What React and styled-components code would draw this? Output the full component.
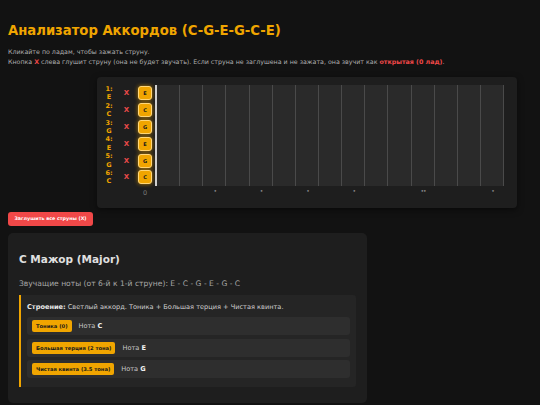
import React from "react";
import styled, { createGlobalStyle } from "styled-components";

const STRINGS = [
  { num: 1, note: "E" },
  { num: 2, note: "C" },
  { num: 3, note: "G" },
  { num: 4, note: "E" },
  { num: 5, note: "G" },
  { num: 6, note: "C" },
];

const FRETS = 15;
const MARKERS = { 3: 1, 5: 1, 7: 1, 9: 1, 12: 2, 15: 1 };

const INTERVALS = [
  { name: "Тоника (0)", note: "C" },
  { name: "Большая терция (2 тона)", note: "E" },
  { name: "Чистая квинта (3.5 тона)", note: "G" },
];

const App = () => {
  return (
    <Page>
      <GlobalStyle />
      <Title>Анализатор Аккордов (C-G-E-G-C-E)</Title>
      <Hint>
        Кликайте по ладам, чтобы зажать струну.
        <br />
        Кнопка <Red>X</Red> слева глушит струну (она не будет звучать). Если
        струна не заглушена и не зажата, она звучит как{" "}
        <Red>открытая (0 лад)</Red>.
      </Hint>

      <Fretboard>
        {STRINGS.map((s) => (
          <StringRow key={s.num}>
            <Label>
              {s.num}: {s.note}
            </Label>
            <Mute>X</Mute>
            <OpenNote>{s.note}</OpenNote>
            <Board>
              {Array.from({ length: FRETS }).map((_, i) => (
                <Fret key={i} $first={i === 0} />
              ))}
            </Board>
          </StringRow>
        ))}
        <NumbersRow>
          <Label />
          <Mute as="span" />
          <Zero>0</Zero>
          <Board>
            {Array.from({ length: FRETS }).map((_, i) => (
              <Marker key={i}>
                {MARKERS[i + 1] ? "•".repeat(MARKERS[i + 1]) : ""}
              </Marker>
            ))}
          </Board>
        </NumbersRow>
      </Fretboard>

      <MuteAll>Заглушить все струны (X)</MuteAll>

      <Card>
        <ChordName>C Мажор (Major)</ChordName>
        <Notes>Звучащие ноты (от 6-й к 1-й струне): E - C - G - E - G - C</Notes>
        <Structure>
          <Desc>
            <b>Строение:</b> Светлый аккорд. Тоника + Большая терция + Чистая
            квинта.
          </Desc>
          {INTERVALS.map((it) => (
            <IntervalRow key={it.name}>
              <Badge>{it.name}</Badge>
              <span>
                Нота <b>{it.note}</b>
              </span>
            </IntervalRow>
          ))}
        </Structure>
      </Card>
    </Page>
  );
};

export default App;

const GlobalStyle = createGlobalStyle`
  html, body {
    margin: 0;
    padding: 0;
    background: #121212;
  }
  body {
    font-family: "DejaVu Sans", Verdana, sans-serif;
    color: #e0e0e0;
  }
`;

const Page = styled.div`
  width: 540px;
  height: 405px;
  overflow: hidden;
  padding: 21px 8px 0 8px;
  box-sizing: border-box;
  background: #121212;
`;

const Title = styled.h1`
  margin: 0 0 6px;
  font-size: 13.2px;
  font-weight: bold;
  color: #f0a500;
  line-height: 20px;
`;

const Hint = styled.p`
  margin: 0 0 10px;
  font-size: 6.3px;
  line-height: 10px;
  color: #b0b0b0;
`;

const Red = styled.b`
  color: #f04848;
`;

const Fretboard = styled.div`
  width: 420px;
  margin-left: 89px;
  box-sizing: border-box;
  padding: 8px 13px 9px 4px;
  background: #1e1e1e;
  border-radius: 4px;
  box-shadow: 0 2px 6px rgba(0, 0, 0, 0.5);
`;

const StringRow = styled.div`
  display: flex;
  align-items: center;
  height: 16.8px;
`;

const Label = styled.div`
  width: 16px;
  font-size: 6.5px;
  line-height: 8.5px;
  font-weight: bold;
  color: #f0a500;
  text-align: center;
  padding: 0 3px;
  box-sizing: border-box;
`;

const Mute = styled.button`
  width: 19px;
  padding: 0;
  border: none;
  background: none;
  color: #e84a4a;
  font-family: inherit;
  font-weight: bold;
  font-size: 7px;
  text-align: center;
  cursor: pointer;
`;

const OpenNote = styled.div`
  width: 14px;
  height: 14px;
  margin: 0 3px 0 2px;
  box-sizing: border-box;
  display: flex;
  align-items: center;
  justify-content: center;
  background: #f0a500;
  border: 1px solid #ffd77a;
  border-radius: 3px;
  box-shadow: 0 0 4px rgba(240, 165, 0, 0.7);
  color: #1a1a1a;
  font-size: 5px;
  font-weight: bold;
`;

const Board = styled.div`
  flex: 1;
  display: flex;
  align-self: stretch;
`;

const Fret = styled.div`
  flex: 1;
  background: #2a2a2a;
  border-right: 1px solid #4a4a4a;
  border-left: ${(p) => (p.$first ? "2px solid #d0d0d0" : "none")};
  cursor: pointer;
`;

const NumbersRow = styled.div`
  display: flex;
  align-items: center;
  height: 12px;
  margin-top: 1px;
`;

const Zero = styled.div`
  width: 14px;
  margin: 0 3px 0 2px;
  text-align: center;
  font-size: 6.5px;
  color: #777;
`;

const Marker = styled.div`
  flex: 1;
  text-align: center;
  font-size: 6px;
  color: #888;
  letter-spacing: -1px;
  &:first-child {
    margin-left: 2px;
  }
`;

const MuteAll = styled.button`
  display: block;
  margin-top: 4px;
  width: 85px;
  height: 14px;
  padding: 0;
  border: none;
  border-radius: 3px;
  background: #f04848;
  color: #fff;
  font-family: inherit;
  font-weight: bold;
  font-size: 4.8px;
  cursor: pointer;
`;

const Card = styled.div`
  margin-top: 7px;
  width: 359px;
  box-sizing: border-box;
  padding: 16px 11px 16px;
  background: #1e1e1e;
  border-radius: 5px;
`;

const ChordName = styled.h2`
  margin: 4px 0 14px;
  font-size: 10.5px;
  font-weight: bold;
  color: #e0e0e0;
`;

const Notes = styled.p`
  margin: 0 0 7px;
  font-size: 7.6px;
  color: #a8a8a8;
`;

const Structure = styled.div`
  border-left: 2px solid #f0a500;
  background: #252525;
  border-radius: 0 3px 3px 0;
  padding: 8px 6px 9px;
  display: flex;
  flex-direction: column;
  gap: 3.5px;
`;

const Desc = styled.div`
  font-size: 6.6px;
  color: #d0d0d0;
  margin-bottom: 3px;
  b {
    color: #e8e8e8;
  }
`;

const IntervalRow = styled.div`
  display: flex;
  align-items: center;
  gap: 7px;
  height: 18px;
  padding: 0 5px;
  background: #2e2e2e;
  border-radius: 3px;
  font-size: 6.6px;
  color: #c8c8c8;
  b {
    color: #f0f0f0;
  }
`;

const Badge = styled.span`
  display: inline-flex;
  align-items: center;
  height: 12px;
  padding: 0 4px;
  background: #f0a500;
  border-radius: 2px;
  color: #1a1a1a;
  font-size: 5.2px;
  font-weight: bold;
`;
